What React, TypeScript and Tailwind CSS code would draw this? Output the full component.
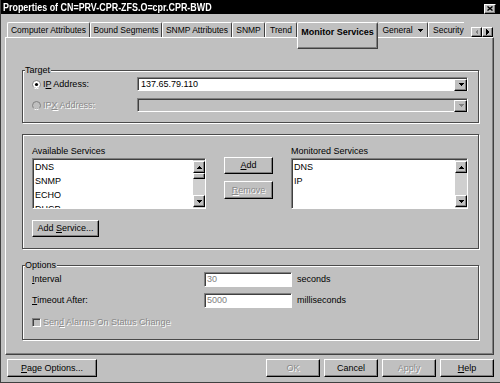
import React from 'react';

const raised =
  'bg-[#c0c0c0] border border-t-white border-l-white border-r-black border-b-black shadow-[inset_-1px_-1px_0_#808080]';
const sunken =
  'border border-t-[#808080] border-l-[#808080] border-r-white border-b-white shadow-[inset_1px_1px_0_#404040]';
const dim = 'text-[#8a8a8a] [text-shadow:1px_1px_0_#fff]';

type Dir = 'up' | 'down' | 'left' | 'right';

function Arrow({ dir, color = '#000' }: { dir: Dir; color?: string }) {
  const vertical = dir === 'up' || dir === 'down';
  const pts = {
    up: '0,3 6,3 3,0',
    down: '0,0 6,0 3,3',
    left: '3,0 3,6 0,3',
    right: '0,0 0,6 3,3',
  }[dir];
  return (
    <svg
      width={vertical ? 6 : 3}
      height={vertical ? 3 : 6}
      viewBox={vertical ? '0 0 6 3' : '0 0 3 6'}
      shapeRendering="crispEdges"
    >
      <polygon points={pts} fill={color} />
    </svg>
  );
}

const U = ({ children }: { children: React.ReactNode }) => (
  <span className="underline underline-offset-[1px]">{children}</span>
);

function Button({
  children,
  className = '',
  disabled,
}: {
  children: React.ReactNode;
  className?: string;
  disabled?: boolean;
}) {
  return (
    <div className={`flex items-center justify-center ${raised} ${disabled ? dim : ''} ${className}`}>
      <span className="whitespace-nowrap">{children}</span>
    </div>
  );
}

function Group({
  label,
  className = '',
  children,
}: {
  label?: string;
  className?: string;
  children: React.ReactNode;
}) {
  return (
    <div
      className={`relative border border-[#4a4a4a] shadow-[1px_1px_0_#fff,inset_1px_1px_0_#fff] ${className}`}
    >
      {label && (
        <span className="absolute left-[2px] -top-[6px] bg-[#c0c0c0] pr-[1px] leading-[11px]">
          {label}
        </span>
      )}
      {children}
    </div>
  );
}

function Radio({ checked, disabled }: { checked?: boolean; disabled?: boolean }) {
  return (
    <svg width="9" height="9" viewBox="0 0 9 9">
      <circle cx="4.5" cy="4.5" r="4" fill={disabled ? '#c0c0c0' : '#fff'} stroke="#808080" strokeWidth="1" />
      <path d="M1.6 7.4 A4 4 0 0 0 7.4 7.4" fill="none" stroke="#fff" strokeWidth="1" />
      {checked && <circle cx="4.5" cy="4.5" r="1.6" fill="#000" />}
    </svg>
  );
}

function ListBox({ items, thumb }: { items: string[]; thumb?: boolean }) {
  return (
    <div className={`h-[51px] bg-white flex pt-[1px] pl-[1px] ${sunken}`}>
      <div className="flex-1 overflow-hidden pl-[1px] leading-[14px]">
        {items.map((i) => (
          <div key={i}>{i}</div>
        ))}
      </div>
      <div className="w-[12px] flex flex-col bg-[#cfcfcf] pt-[1px] pb-[1px]">
        <div className={`h-[12px] flex items-center justify-center ${raised}`}>
          <Arrow dir="up" />
        </div>
        {thumb && <div className={`h-[6px] ${raised}`} />}
        <div className="flex-1" />
        <div className={`h-[12px] flex items-center justify-center ${raised}`}>
          <Arrow dir="down" />
        </div>
      </div>
    </div>
  );
}

const tabs = [
  { label: 'Computer Attributes', w: 'w-[83px]' },
  { label: 'Bound Segments', w: 'w-[72px]' },
  { label: 'SNMP Attributes', w: 'w-[70px]' },
  { label: 'SNMP', w: 'w-[33px]' },
  { label: 'Trend', w: 'w-[32px]' },
];

export default function App() {
  return (
    <div className="w-[500px] h-[383px] bg-[#c0c0c0] flex flex-col border-l border-b border-[#404040] overflow-hidden text-[9px] leading-[11px] text-black font-['Liberation_Sans',Arial,sans-serif]">
      {/* Title bar */}
      <div className="h-[14px] shrink-0 bg-black flex items-center justify-between pl-[2px] pr-[4px]">
        <span className="inline-block text-white font-bold text-[10.5px] leading-[14px] whitespace-nowrap scale-x-85 origin-left">
          Properties of CN=PRV-CPR-ZFS.O=cpr.CPR-BWD
        </span>
        <div className={`w-[12px] h-[10px] mt-[3px] flex items-center justify-center ${raised}`}>
          <svg width="6" height="5" viewBox="0 0 6 5">
            <path d="M0.5 0.5 L5.5 4.5 M5.5 0.5 L0.5 4.5" stroke="#000" strokeWidth="1.4" />
          </svg>
        </div>
      </div>

      {/* Tabs */}
      <div className="mt-[8px] pl-[6px] h-[15px] flex items-start relative z-10 text-[8.5px]">
        {tabs.map((t) => (
          <div
            key={t.label}
            className={`${t.w} h-[15px] flex items-center justify-center whitespace-nowrap border-t border-l border-r border-t-white border-l-white border-r-[#404040] rounded-t-[2px]`}
          >
            {t.label}
          </div>
        ))}
        <div className="w-[81px] h-[27px] pt-[4px] flex justify-center whitespace-nowrap bg-[#c0c0c0] font-bold text-[9px] border border-t-white border-l-white border-r-[#404040] border-b-[#404040] shadow-[inset_-1px_-1px_0_#808080] rounded-t-[2px]">
          Monitor Services
        </div>
        <div className="w-[50px] h-[15px] flex items-center justify-center gap-[4px] whitespace-nowrap border-t border-r border-t-white border-r-[#404040] rounded-t-[2px]">
          <span>General</span>
          <Arrow dir="down" />
        </div>
        <div className="w-[36px] h-[15px] flex items-center pl-[4px] overflow-hidden whitespace-nowrap border-t border-l border-t-white border-l-white">
          Security
        </div>
        <div className="ml-[7px] mt-[5px] flex h-[10px]">
          <div className={`w-[11px] h-[10px] flex items-center justify-center ${raised}`}>
            <Arrow dir="left" color="#808080" />
          </div>
          <div className={`w-[11px] h-[10px] flex items-center justify-center ${raised}`}>
            <Arrow dir="right" />
          </div>
        </div>
      </div>

      {/* Page */}
      <div className="ml-[4px] w-[489px] h-[318px] shrink-0 pl-[16px] pr-[14px] pt-[32px] border border-t-white border-l-white border-r-[#404040] border-b-[#404040] shadow-[inset_-1px_-1px_0_#808080]">
        <Group label="Target" className="pt-[6px] pb-[10px] pl-[9px] pr-[10px] flex flex-col gap-[7px]">
          <div className="h-[14px] flex items-center">
            <Radio checked />
            <span className="ml-[2px] w-[94px]">
              I<U>P</U> Address:
            </span>
            <div className={`flex-1 h-[14px] bg-white flex items-center pl-[3px] pt-[1px] ${sunken}`}>
              <span className="flex-1">137.65.79.110</span>
              <div className={`w-[13px] h-[12px] flex items-center justify-center ${raised}`}>
                <Arrow dir="down" />
              </div>
            </div>
          </div>
          <div className="h-[14px] flex items-center">
            <Radio disabled />
            <span className={`ml-[2px] w-[94px] ${dim}`}>
              IP<U>X</U> Address:
            </span>
            <div className={`flex-1 h-[14px] bg-[#c0c0c0] flex items-center justify-end pt-[1px] ${sunken}`}>
              <div className={`w-[13px] h-[12px] flex items-center justify-center ${raised}`}>
                <Arrow dir="down" color="#808080" />
              </div>
            </div>
          </div>
        </Group>

        <Group className="mt-[11px] h-[115px] pl-[9px] pr-[10px] flex">
          <div className="w-[174px] pt-[11px] flex flex-col">
            <span className="h-[11px]">Available Services</span>
            <div className="mt-[1px]">
              <ListBox items={['DNS', 'SNMP', 'ECHO', 'DHCP']} thumb />
            </div>
            <Button className="mt-[11px] w-[67px] h-[17px]">
              Add <U>S</U>ervice...
            </Button>
          </div>
          <div className="ml-[18px] w-[49px] pt-[22px] flex flex-col gap-[7px]">
            <Button className="h-[17px]">
              <U>A</U>dd
            </Button>
            <Button className="h-[18px]" disabled>
              <U>R</U>emove
            </Button>
          </div>
          <div className="ml-[18px] flex-1 pt-[11px] flex flex-col">
            <span className="h-[11px]">Monitored Services</span>
            <div className="mt-[1px]">
              <ListBox items={['DNS', 'IP']} />
            </div>
          </div>
        </Group>

        <Group label="Options" className="mt-[16px] pt-[6px] pb-[10px] pl-[9px] pr-[10px] flex flex-col">
          <div className="h-[15px] flex items-center">
            <span className="w-[172px]">
              <U>I</U>nterval
            </span>
            <div className={`w-[88px] h-[15px] bg-white pl-[2px] flex items-center text-[#808080] ${sunken}`}>30</div>
            <span className="ml-[5px]">seconds</span>
          </div>
          <div className="mt-[6px] h-[15px] flex items-center">
            <span className="w-[172px]">
              <U>T</U>imeout After:
            </span>
            <div className={`w-[88px] h-[15px] bg-white pl-[2px] flex items-center text-[#808080] ${sunken}`}>5000</div>
            <span className="ml-[5px]">milliseconds</span>
          </div>
          <div className="mt-[8px] h-[13px] flex items-center">
            <div className={`w-[9px] h-[9px] bg-[#c0c0c0] ${sunken}`} />
            <span className={`ml-[2px] ${dim}`}>
              Sen<U>d</U> Alarms On Status Change
            </span>
          </div>
        </Group>
      </div>

      {/* Footer buttons */}
      <div className="mt-[4px] pl-[6px] pr-[6px] flex">
        <Button className="w-[90px] h-[18px]">
          <U>P</U>age Options...
        </Button>
        <div className="ml-auto flex gap-[4px]">
          <Button className="w-[54px] h-[18px]" disabled>
            OK
          </Button>
          <Button className="w-[54px] h-[18px]">Cancel</Button>
          <Button className="w-[54px] h-[18px]" disabled>
            Apply
          </Button>
          <Button className="w-[54px] h-[18px]">
            <U>H</U>elp
          </Button>
        </div>
      </div>
    </div>
  );
}
